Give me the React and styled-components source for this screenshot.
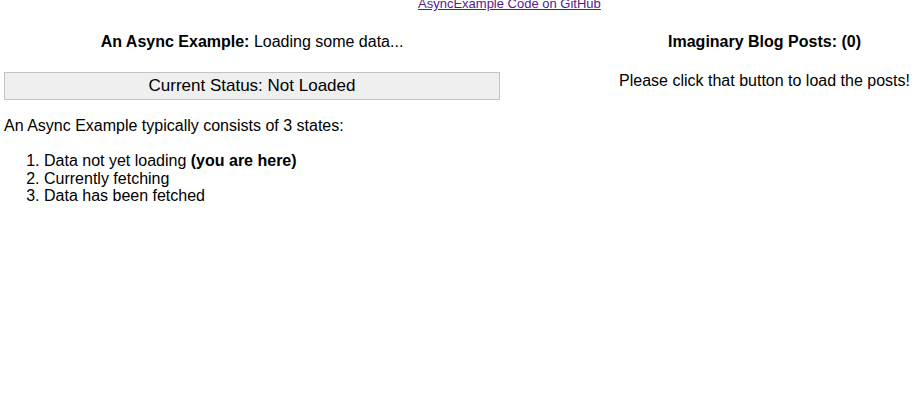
import React from 'react'
import styled, { createGlobalStyle } from 'styled-components'

const GlobalStyle = createGlobalStyle`
  html, body {
    margin: 0;
    padding: 0;
    background: #ffffff;
  }
  body {
    font-family: "Liberation Sans", Arial, Helvetica, sans-serif;
    font-size: 16px;
    color: #000000;
  }
`

const TopBar = styled.div`
  height: 12px;
  margin-top: -3px;
  padding-left: 418px;
  font-size: 13px;
  line-height: 13px;
`

const RepoLink = styled.a`
  color: #551a8b;
  text-decoration: underline;
`

const Columns = styled.div`
  display: grid;
  grid-template-columns: 496px 1fr;
  column-gap: 110px;
  padding-left: 4px;
`

const Column = styled.section`
  display: flex;
  flex-direction: column;
`

const Heading = styled.h3`
  margin: 24px 0 0;
  font-size: 16px;
  font-weight: normal;
  text-align: center;
  line-height: normal;

  strong {
    font-weight: bold;
  }
`

const StatusBox = styled.div`
  margin-top: 21px;
  height: 28px;
  box-sizing: border-box;
  border: 1px solid #c4c4c4;
  background: #efefef;
  text-align: center;
  padding-top: 3px;
  font-size: 17px;
  line-height: normal;
`

const Text = styled.p`
  margin: ${p => p.$top || 16}px 0 0;
  line-height: normal;
  text-align: ${p => (p.$center ? 'center' : 'left')};
`

const Steps = styled.ol`
  margin: 17px 0 0;
  padding-left: 40px;
  line-height: 17.5px;
`

const App = () => {
  return (
    <>
      <GlobalStyle />
      <TopBar>
        <RepoLink href="#">AsyncExample Code on GitHub</RepoLink>
      </TopBar>
      <Columns>
        <Column>
          <Heading>
            <strong>An Async Example:</strong> Loading some data...
          </Heading>
          <StatusBox>Current Status: Not Loaded</StatusBox>
          <Text $top={17}>An Async Example typically consists of 3 states:</Text>
          <Steps>
            <li>
              Data not yet loading <strong>(you are here)</strong>
            </li>
            <li>Currently fetching</li>
            <li>Data has been fetched</li>
          </Steps>
        </Column>
        <Column>
          <Heading>
            <strong>Imaginary Blog Posts: (0)</strong>
          </Heading>
          <Text $top={21} $center>
            Please click that button to load the posts!
          </Text>
        </Column>
      </Columns>
    </>
  )
}

export default App
